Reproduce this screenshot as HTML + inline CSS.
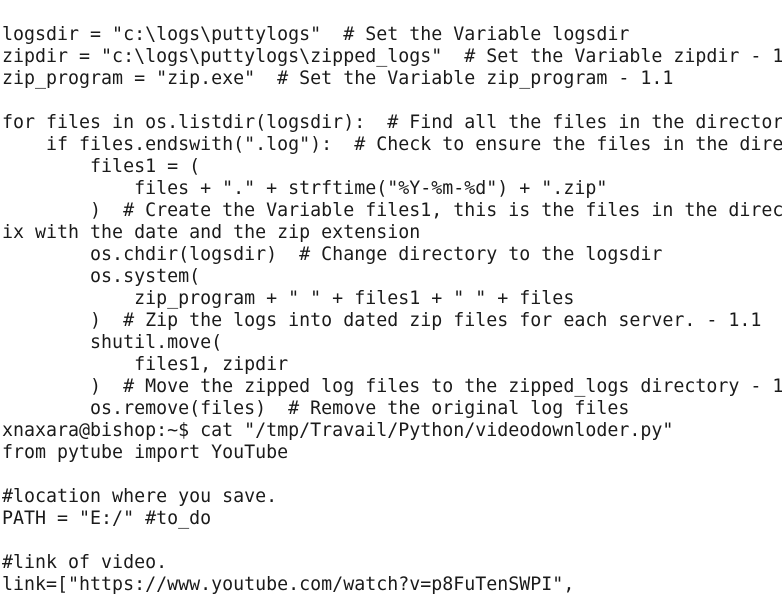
<!DOCTYPE html>
<html><head><style>
html,body{margin:0;padding:0;background:#fff;width:782px;height:597px;overflow:hidden}
pre{margin:0;padding:24px 0 0 2px;font-family:"DejaVu Sans Mono","Liberation Mono",monospace;font-size:18.3px;line-height:22px;color:#1a1a1a;white-space:pre}
</style></head><body><pre>logsdir = "c:\logs\puttylogs"  # Set the Variable logsdir
zipdir = "c:\logs\puttylogs\zipped_logs"  # Set the Variable zipdir - 1
zip_program = "zip.exe"  # Set the Variable zip_program - 1.1

for files in os.listdir(logsdir):  # Find all the files in the director
    if files.endswith(".log"):  # Check to ensure the files in the dire
        files1 = (
            files + "." + strftime("%Y-%m-%d") + ".zip"
        )  # Create the Variable files1, this is the files in the direc
ix with the date and the zip extension
        os.chdir(logsdir)  # Change directory to the logsdir
        os.system(
            zip_program + " " + files1 + " " + files
        )  # Zip the logs into dated zip files for each server. - 1.1
        shutil.move(
            files1, zipdir
        )  # Move the zipped log files to the zipped_logs directory - 1
        os.remove(files)  # Remove the original log files
xnaxara@bishop:~$ cat "/tmp/Travail/Python/videodownloder.py"
from pytube import YouTube

#location where you save.
PATH = "E:/" #to_do

#link of video.
link=["https://www.youtube.com/watch?v=p8FuTenSWPI",
</pre></body></html>
